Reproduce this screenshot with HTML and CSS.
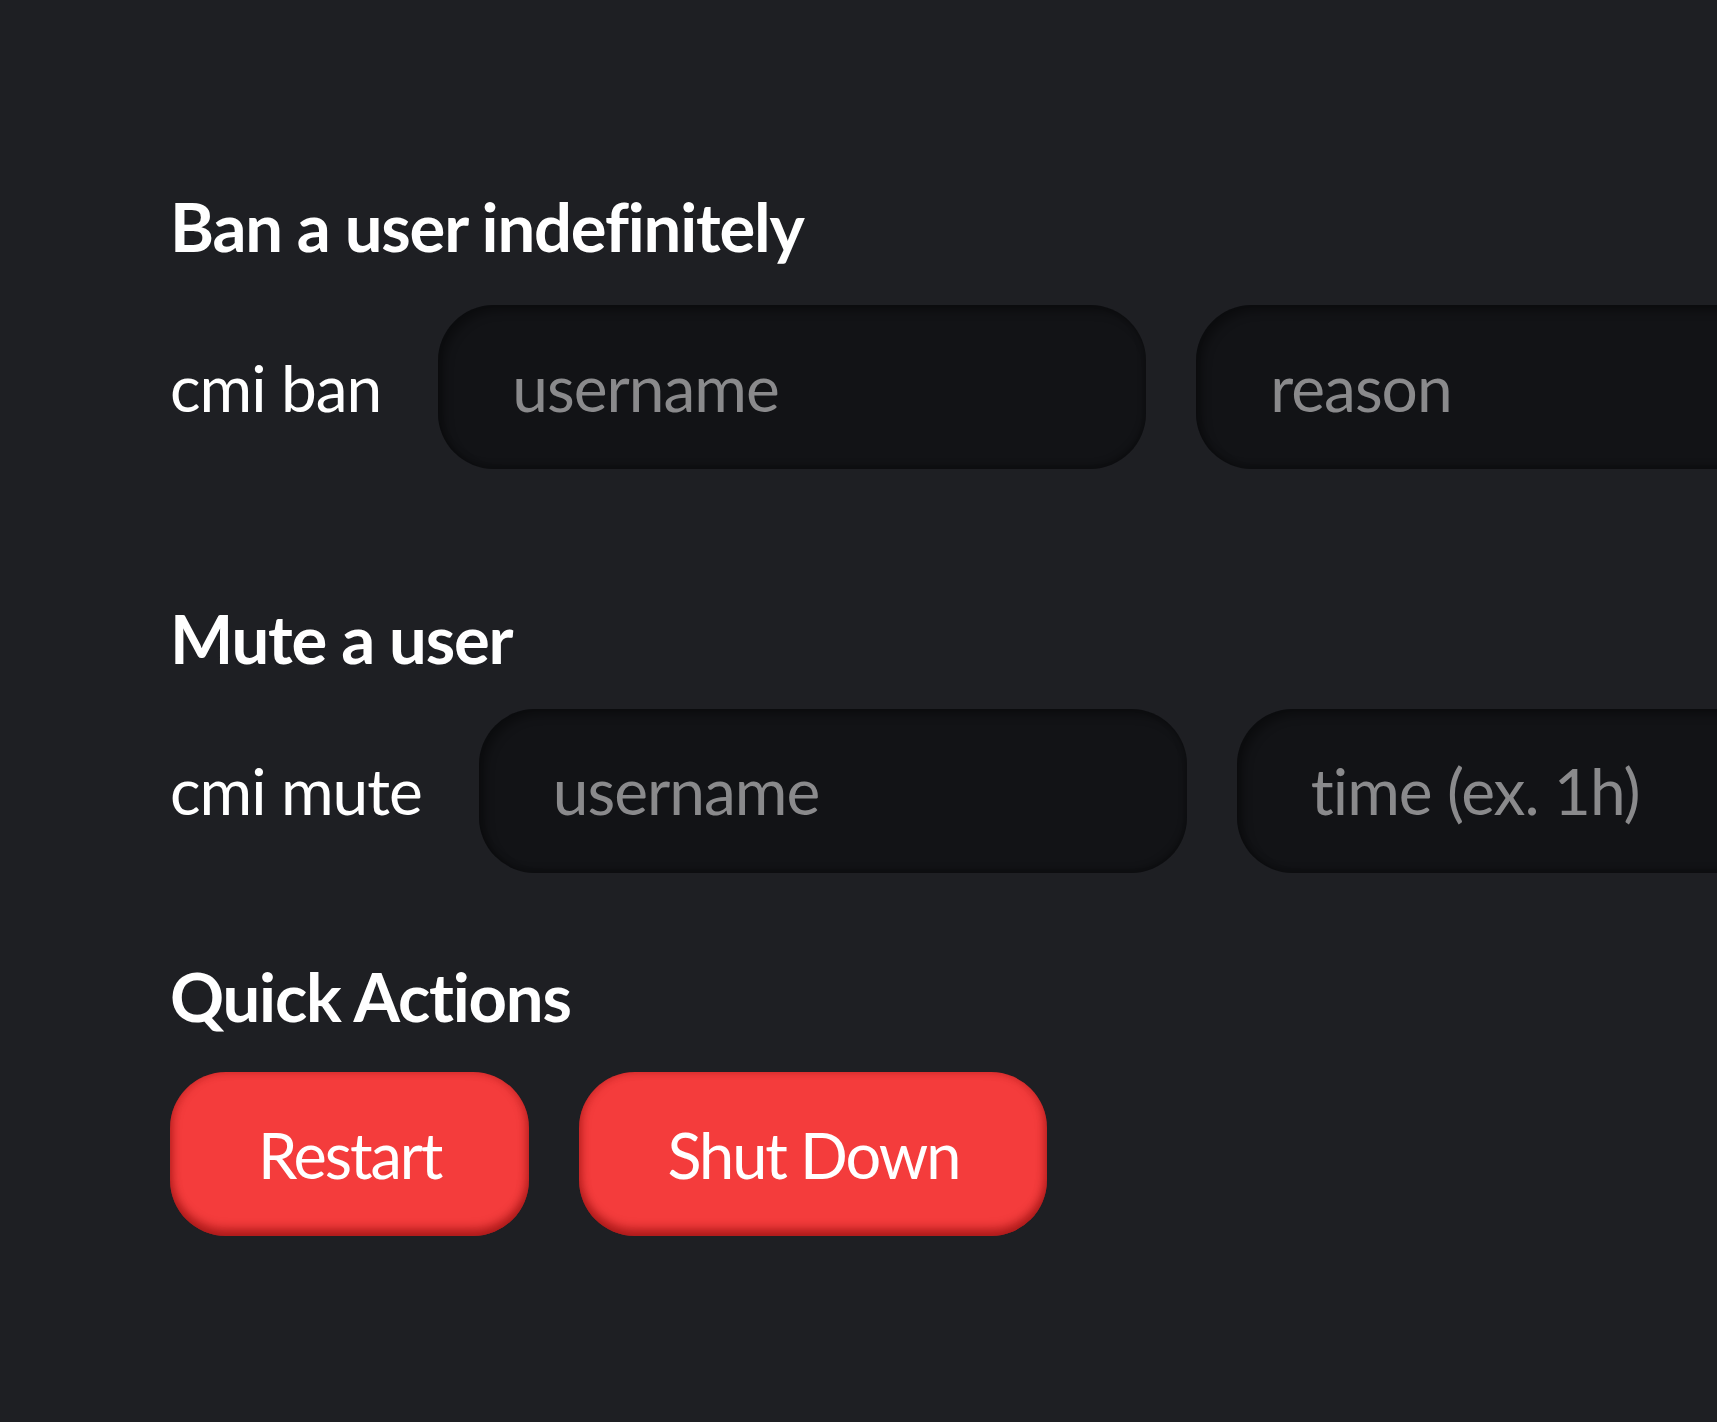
FILE: index.html
```html
<!DOCTYPE html>
<html lang="en">
<head>
<meta charset="utf-8">
<title>Moderation</title>
<link rel="stylesheet" href="styles.css">
</head>
<body>
<main class="page">
  <section class="section section-ban">
    <h2 class="title">Ban a user indefinitely</h2>
    <div class="row row-ban">
      <span class="cmd">cmi ban</span>
      <input class="field" type="text" placeholder="username">
      <input class="field" type="text" placeholder="reason">
    </div>
  </section>
  <section class="section section-mute">
    <h2 class="title">Mute a user</h2>
    <div class="row row-mute">
      <span class="cmd">cmi mute</span>
      <input class="field" type="text" placeholder="username">
      <input class="field" type="text" placeholder="time (ex. 1h)">
    </div>
  </section>
  <section class="section section-quick">
    <h2 class="title">Quick Actions</h2>
    <div class="row actions">
      <button class="btn" type="button">Restart</button>
      <button class="btn" type="button">Shut Down</button>
    </div>
  </section>
</main>
</body>
</html>
```

FILE: styles.css
```css
html, body {
  margin: 0;
  padding: 0;
  background: #1e1f23;
  overflow: hidden;
}
body {
  width: 1717px;
  height: 1422px;
  font-family: Lato, "Noto Sans", sans-serif;
  font-variant-ligatures: none;
  color: #ffffff;
}
.page {
  padding: 186px 0 0 170px;
  display: flex;
  flex-direction: column;
}
.section {
  display: flex;
  flex-direction: column;
}
.title {
  margin: 0;
  font-size: 67px;
  font-weight: 700;
  letter-spacing: -1.2px;
  line-height: 1.2;
}
.row {
  display: flex;
  align-items: center;
  gap: 50px;
}
.row-ban {
  margin-top: 39px;
}
.row-mute {
  margin-top: 30px;
}
.cmd {
  font-size: 64px;
  letter-spacing: -1px;
  white-space: nowrap;
  margin-right: 7px;
}
.field {
  flex: 0 0 auto;
  width: 708px;
  height: 164px;
  box-sizing: border-box;
  border: none;
  outline: none;
  border-radius: 56px;
  padding: 0 0 0 74px;
  background: #121316;
  box-shadow: inset 6px 6px 10px rgba(0,0,0,0.35), inset -2px -4px 6px rgba(0,0,0,0.25);
  font-family: inherit;
  font-variant-ligatures: none;
  font-size: 64px;
  letter-spacing: -1px;
  color: #ffffff;
}
.field::placeholder {
  color: #8a8a8c;
}
.section-mute {
  margin-top: 129px;
}
.section-quick {
  margin-top: 83px;
}
.actions {
  margin-top: 36px;
}
.btn {
  height: 164px;
  box-sizing: border-box;
  border: none;
  border-radius: 56px;
  padding: 0 88px;
  background: #f43c3c;
  box-shadow: inset 0 -8px 10px rgba(120,0,0,0.45), inset 4px 0 8px rgba(120,0,0,0.2), inset -4px 0 8px rgba(120,0,0,0.2);
  font-family: inherit;
  font-variant-ligatures: none;
  font-size: 63px;
  letter-spacing: -2px;
  color: #ffffff;
}
```
